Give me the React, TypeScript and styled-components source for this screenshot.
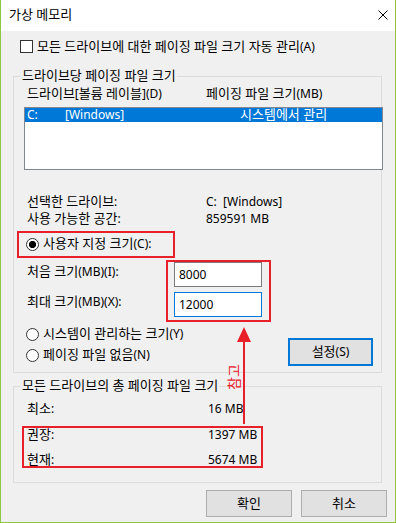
import React from 'react';
import styled, { createGlobalStyle } from 'styled-components';

const GlobalStyle = createGlobalStyle`
  html, body {
    margin: 0;
    padding: 0;
    background: #ffffff;
  }
  body {
    font-family: "Noto Sans", "Noto Sans CJK KR", sans-serif;
    font-size: 12px;
    color: #000000;
  }
  * {
    box-sizing: border-box;
  }
`;

// Hangul runs are set a pixel larger so they take the width Malgun Gothic gives them;
// line-height 0 keeps them from stretching the line box
const Hangul = styled.span`
  font-size: 13px;
  line-height: 0;
`;

const HANGUL_RUN = /([\uAC00-\uD7A3](?:[\uAC00-\uD7A3 ]*[\uAC00-\uD7A3])?)/;

function T({ children }: { children: string }) {
  return (
    <>
      {children
        .split(HANGUL_RUN)
        .map((part, i) => (i % 2 ? <Hangul key={i}>{part}</Hangul> : part))}
    </>
  );
}

const Window = styled.div`
  position: relative;
  width: 396px;
  height: 523px;
  background: #f0f0f0;
  border: 1px solid #8fc640;
  border-top: none;
  display: flex;
  flex-direction: column;
  overflow: hidden;
`;

const TitleBar = styled.div`
  height: 31px;
  background: #ffffff;
  display: flex;
  align-items: center;
  justify-content: space-between;
  padding: 0 7px 1px 8px;
  line-height: 16px;
`;

const Body = styled.div`
  padding: 0 13px 0 12px;
`;

const CheckRow = styled.div`
  display: flex;
  align-items: center;
  height: 16px;
  margin-top: 7px;
  padding-left: 7px;
  white-space: nowrap;
`;

const CheckBox = styled.span`
  flex: none;
  width: 13px;
  height: 13px;
  border: 1px solid #333333;
  background: #ffffff;
  margin-right: 4px;
`;

const Group = styled.fieldset<{ $top: number; $bottom: number }>`
  margin: ${({ $top }) => $top}px 0 0;
  padding: 0 0 ${({ $bottom }) => $bottom}px;
  border: 1px solid #dcdcdc;
  min-width: 0;
`;

const Legend = styled.legend`
  margin-left: 7px;
  padding: 0 1px;
  height: 16px;
  line-height: 16px;
  white-space: nowrap;
`;

const TwoCol = styled.div<{ $col: number }>`
  display: grid;
  grid-template-columns: ${({ $col }) => $col}px 1fr;
  line-height: 16px;
  padding-left: 13px;
  white-space: nowrap;
`;

const Headers = styled(TwoCol)`
  margin-top: 2px;
`;

const DriveList = styled.div`
  margin: 5px 0 0 10px;
  width: 359px;
  height: 63px;
  border: 1px solid #828790;
  background: #ffffff;
`;

const DriveRow = styled.div`
  display: grid;
  grid-template-columns: 38px 175px 1fr;
  height: 14px;
  line-height: 14px;
  padding-left: 2px;
  background: #0078d7;
  color: #ffffff;
  white-space: nowrap;
`;

const InfoGrid = styled(TwoCol)`
  margin-top: 24px;
  row-gap: 1px;
`;

const Annotation = styled.div`
  border: 2px solid #e8202a;
`;

const CustomBox = styled(Annotation)`
  margin: 4px 0 0 3px;
  width: 158px;
  height: 27px;
  padding: 3px 0 0 7px;
`;

const RadioRow = styled.div`
  display: flex;
  align-items: center;
  height: 16px;
  line-height: 16px;
  white-space: nowrap;
`;

const Radio = styled.span<{ $checked?: boolean }>`
  flex: none;
  width: 13px;
  height: 13px;
  border-radius: 50%;
  border: 1px solid #333333;
  margin-right: 4px;
  background: ${({ $checked }) =>
    $checked
      ? 'radial-gradient(circle, #000000 0 3.3px, #ffffff 3.9px)'
      : '#ffffff'};
`;

const SizeRow = styled.div`
  display: flex;
  margin-top: 2px;
`;

const SizeLabels = styled.div`
  width: 152px;
  padding: 4px 0 0 13px;
  display: grid;
  grid-template-rows: 16px 16px;
  row-gap: 14px;
  line-height: 16px;
  align-content: start;
  white-space: nowrap;
`;

const SizeBox = styled(Annotation)`
  width: 105px;
  height: 62px;
  padding: 0 7px 0 6px;
  display: flex;
  flex-direction: column;
  gap: 5px;
`;

const Field = styled.div<{ $focused?: boolean }>`
  height: 25px;
  border: 1px solid ${({ $focused }) => ($focused ? '#0078d7' : '#7a7a7a')};
  background: #ffffff;
  padding-left: 4px;
  line-height: 23px;
`;

const OptionsRow = styled.div`
  display: flex;
  margin-top: 4px;
`;

const OptionList = styled.div`
  display: flex;
  flex-direction: column;
  gap: 5px;
  padding-left: 12px;
`;

const Button = styled.div<{ $default?: boolean }>`
  display: flex;
  align-items: center;
  justify-content: center;
  background: #e1e1e1;
  line-height: 16px;
  border: ${({ $default }) => ($default ? '2px solid #0078d7' : '1px solid #adadad')};
`;

const SetButton = styled(Button)`
  width: 85px;
  height: 28px;
  margin: 12px 8px 0 auto;
`;

const TotalsRow = styled(TwoCol)`
  margin-top: 8px;
  line-height: 13px;
`;

const TotalsBox = styled(Annotation)`
  margin: 11px 0 0 8px;
  width: 241px;
  height: 42px;
  padding-left: 3px;
  display: grid;
  grid-template-columns: 181px 1fr;
  grid-template-rows: 13px 13px;
  row-gap: 12px;
  line-height: 13px;
`;

const Footer = styled.div`
  display: flex;
  justify-content: flex-end;
  gap: 9px;
  margin-top: 7px;
  padding-right: 8px;
`;

const FooterButton = styled(Button)`
  width: 86px;
  height: 27px;
`;

const Arrow = styled.svg`
  position: absolute;
  left: 235px;
  top: 327px;
`;

const Note = styled.span`
  position: absolute;
  left: 218px;
  top: 369px;
  width: 30px;
  height: 16px;
  line-height: 16px;
  text-align: center;
  font-size: 14px;
  color: #e8202a;
  transform: rotate(-90deg);
`;

export default function App() {
  return (
    <Window>
      <GlobalStyle />
      <TitleBar>
        <span>
          <T>가상 메모리</T>
        </span>
        <svg width="10" height="10" viewBox="0 0 10 10">
          <path d="M0.5 0.5 L9.5 9.5 M9.5 0.5 L0.5 9.5" stroke="#000" strokeWidth="1" />
        </svg>
      </TitleBar>
      <Body>
        <CheckRow>
          <CheckBox />
          <span>
            <T>모든 드라이브에 대한 페이징 파일 크기 자동 관리(A)</T>
          </span>
        </CheckRow>

        <Group $top={14} $bottom={6}>
          <Legend>
            <T>드라이브당 페이징 파일 크기</T>
          </Legend>
          <Headers $col={179}>
            <span>
              <T>드라이브[볼륨 레이블](D)</T>
            </span>
            <span>
              <T>페이징 파일 크기(MB)</T>
            </span>
          </Headers>
          <DriveList>
            <DriveRow>
              <span>C:</span>
              <span>[Windows]</span>
              <span>
                <T>시스템에서 관리</T>
              </span>
            </DriveRow>
          </DriveList>
          <InfoGrid $col={179}>
            <span>
              <T>선택한 드라이브:</T>
            </span>
            <span>C:&nbsp;&nbsp;[Windows]</span>
            <span>
              <T>사용 가능한 공간:</T>
            </span>
            <span>859591 MB</span>
          </InfoGrid>
          <CustomBox>
            <RadioRow>
              <Radio $checked />
              <span>
                <T>사용자 지정 크기(C):</T>
              </span>
            </RadioRow>
          </CustomBox>
          <SizeRow>
            <SizeLabels>
              <span>
                <T>처음 크기(MB)(I):</T>
              </span>
              <span>
                <T>최대 크기(MB)(X):</T>
              </span>
            </SizeLabels>
            <SizeBox>
              <Field>8000</Field>
              <Field $focused>12000</Field>
            </SizeBox>
          </SizeRow>
          <OptionsRow>
            <OptionList>
              <RadioRow>
                <Radio />
                <span>
                  <T>시스템이 관리하는 크기(Y)</T>
                </span>
              </RadioRow>
              <RadioRow>
                <Radio />
                <span>
                  <T>페이징 파일 없음(N)</T>
                </span>
              </RadioRow>
            </OptionList>
            <SetButton $default>
              <span>
                <T>설정(S)</T>
              </span>
            </SetButton>
          </OptionsRow>
        </Group>

        <Group $top={5} $bottom={14}>
          <Legend>
            <T>모든 드라이브의 총 페이징 파일 크기</T>
          </Legend>
          <TotalsRow $col={181}>
            <span>
              <T>최소:</T>
            </span>
            <span>16 MB</span>
          </TotalsRow>
          <TotalsBox>
            <span>
              <T>권장:</T>
            </span>
            <span>1397 MB</span>
            <span>
              <T>현재:</T>
            </span>
            <span>5674 MB</span>
          </TotalsBox>
        </Group>
      </Body>

      <Footer>
        <FooterButton>
          <span>
            <T>확인</T>
          </span>
        </FooterButton>
        <FooterButton>
          <span>
            <T>취소</T>
          </span>
        </FooterButton>
      </Footer>

      <Arrow width="16" height="97" viewBox="0 0 16 97">
        <polygon points="8,0 1,15 15,15" fill="#e8202a" />
        <rect x="7" y="14" width="2" height="83" fill="#e8202a" />
      </Arrow>
      <Note>참고</Note>
    </Window>
  );
}
